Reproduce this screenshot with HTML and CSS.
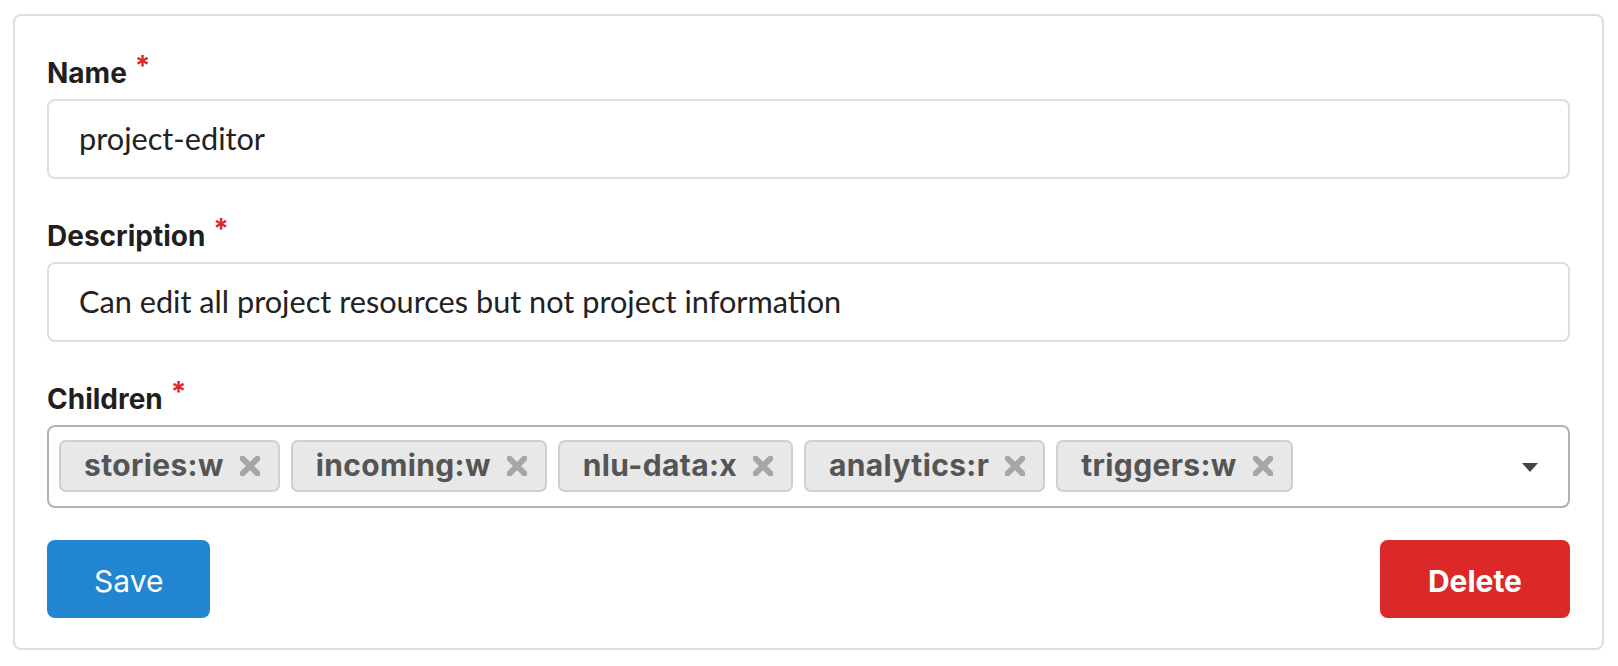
FILE: index.html
```html
<!DOCTYPE html>
<html lang="en">
<head>
<meta charset="utf-8">
<title>Role editor</title>
<link rel="stylesheet" href="styles.css">
</head>
<body>
<form class="card">
  <div class="field">
    <label class="label">Name</label>
    <div class="input">project-editor</div>
  </div>
  <div class="field">
    <label class="label">Description</label>
    <div class="input">Can edit all project resources but not project information</div>
  </div>
  <div class="field field-last">
    <label class="label">Children</label>
    <div class="multi">
      <div class="tags">
        <span class="tag">stories:w<svg class="x" viewBox="0 0 20 20"><path d="M2.5 2.5L17.5 17.5M17.5 2.5L2.5 17.5"/></svg></span>
        <span class="tag">incoming:w<svg class="x" viewBox="0 0 20 20"><path d="M2.5 2.5L17.5 17.5M17.5 2.5L2.5 17.5"/></svg></span>
        <span class="tag">nlu-data:x<svg class="x" viewBox="0 0 20 20"><path d="M2.5 2.5L17.5 17.5M17.5 2.5L2.5 17.5"/></svg></span>
        <span class="tag">analytics:r<svg class="x" viewBox="0 0 20 20"><path d="M2.5 2.5L17.5 17.5M17.5 2.5L2.5 17.5"/></svg></span>
        <span class="tag">triggers:w<svg class="x" viewBox="0 0 20 20"><path d="M2.5 2.5L17.5 17.5M17.5 2.5L2.5 17.5"/></svg></span>
      </div>
      <span class="caret"></span>
    </div>
  </div>
  <div class="actions">
    <button type="button" class="btn btn-save">Save</button>
    <button type="button" class="btn btn-delete">Delete</button>
  </div>
</form>
</body>
</html>
```
FILE: styles.css
```css
* { box-sizing: border-box; }
html, body { margin: 0; background: #ffffff; }
body {
  padding: 14px 14px 0 13px;
  font-family: Inter, "Liberation Sans", sans-serif;
  color: #212121;
}
.card {
  width: 1591px;
  border: 2px solid #dedede;
  border-radius: 8px;
  padding: 39px 32px 30px 32px;
  margin: 0;
  background: #fff;
}
.field { margin-bottom: 39px; }
.field-last { margin-bottom: 0; }
.label {
  display: block;
  font-family: Inter, "Liberation Sans", sans-serif;
  font-weight: 700;
  font-size: 28px;
  line-height: 22px;
  height: 34px;
  padding-bottom: 12px;
  margin-bottom: 10px;
  color: #1f1f1f;
}
.label::after {
  content: "*";
  color: #db2828;
  margin-left: 8px;
  vertical-align: 7px;
  font-weight: 700;
}
.input {
  border: 2px solid #dedede;
  border-radius: 8px;
  height: 80px;
  padding: 20px 30px;
  font-family: Lato, "Liberation Sans", sans-serif;
  font-size: 30.7px;
  line-height: 36px;
  color: #222;
  white-space: nowrap;
}
.multi {
  display: flex;
  align-items: center;
  border: 2px solid #b3b3b3;
  border-radius: 8px;
  height: 83px;
  padding: 13px 30px 14px 10px;
}
.tags {
  flex: 1;
  display: flex;
  gap: 11px;
}
.tag {
  display: inline-flex;
  align-items: center;
  height: 52px;
  border: 2px solid #cfcfcf;
  border-radius: 7px;
  background: #e8e8e8;
  padding: 3px 18px 5px 23px;
  font-family: Inter, "Liberation Sans", sans-serif;
  font-weight: 700;
  font-size: 30px;
  line-height: 40px;
  letter-spacing: 0.35px;
  color: #555555;
}
.x {
  width: 20px;
  height: 20px;
  margin-left: 16px;
  margin-top: 2px;
  fill: none;
  stroke: #a6a6a6;
  stroke-width: 6;
  stroke-linecap: round;
}
.caret {
  width: 0;
  height: 0;
  border-left: 8px solid transparent;
  border-right: 8px solid transparent;
  border-top: 9px solid #444;
  margin-top: 2px;
}
.actions {
  display: flex;
  justify-content: space-between;
  margin-top: 32px;
}
.btn {
  border: 0;
  border-radius: 8px;
  height: 78px;
  padding: 23px 48px 19px;
  font-family: Inter, "Liberation Sans", sans-serif;
  font-size: 30px;
  line-height: 36px;
  color: #fff;
  cursor: pointer;
}
.btn-save { background: #2185d0; font-weight: 400; padding-left: 47px; padding-right: 47px; }
.btn-delete { background: #db2828; font-weight: 700; }
```
